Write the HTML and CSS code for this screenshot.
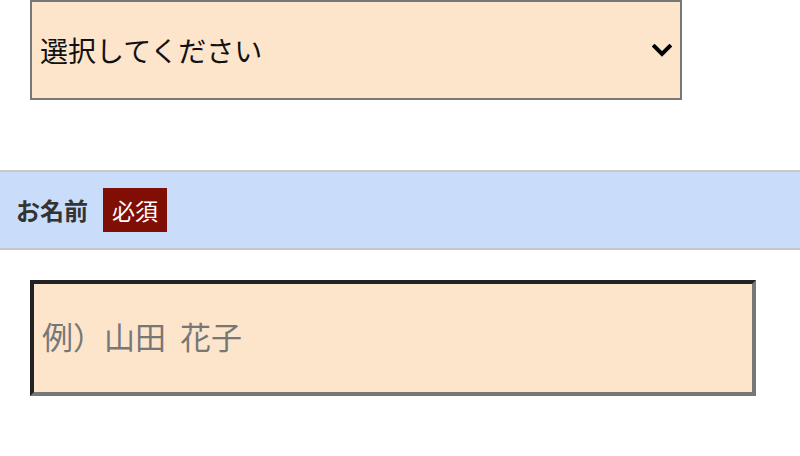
FILE: index.html
```html
<!DOCTYPE html>
<html lang="ja">
<head>
<meta charset="utf-8">
<link rel="stylesheet" href="styles.css">
</head>
<body>
<div class="page">
  <div class="select-wrap">
    <select class="select">
      <option>選択してください</option>
    </select>
    <svg class="chevron" width="20" height="13" viewBox="0 0 20 13" aria-hidden="true">
      <path d="M2.5 2.5 L10 10 L17.5 2.5" fill="none" stroke="#000" stroke-width="4" stroke-linecap="square" stroke-linejoin="miter"/>
    </svg>
  </div>
  <div class="band">
    <span class="label">お名前</span>
    <span class="badge">必須</span>
  </div>
  <div class="field">
    <input class="input" type="text" placeholder="例）山田 花子">
  </div>
</div>
</body>
</html>
```
FILE: styles.css
```css
html, body {
  margin: 0;
  padding: 0;
  background: #fff;
}
body {
  font-family: "Noto Sans CJK JP", "Noto Sans", sans-serif;
}
.page {
  display: flex;
  flex-direction: column;
}
.select-wrap {
  position: relative;
  width: 652px;
  margin-left: 30px;
}
.select {
  appearance: none;
  -webkit-appearance: none;
  display: block;
  box-sizing: border-box;
  width: 652px;
  height: 100px;
  margin: 0;
  padding: 0 40px 0 8px;
  border: 2px solid #777;
  border-radius: 0;
  background: #fde5cc;
  color: #111;
  font-family: "Noto Sans CJK JP", sans-serif;
  font-size: 28px;
  outline: none;
}
.chevron {
  position: absolute;
  left: 622px;
  top: 44px;
}
.band {
  margin-top: 70px;
  height: 76px;
  box-sizing: content-box;
  border-top: 2px solid #c8c8c8;
  border-bottom: 2px solid #c8c8c8;
  background: #c9dcf9;
  display: flex;
  align-items: center;
  padding-left: 16px;
  gap: 15px;
}
.label {
  font-size: 24px;
  font-weight: 700;
  color: #333;
  line-height: 1;
}
.badge {
  background: #800e05;
  color: #fff;
  font-size: 23px;
  line-height: 44px;
  height: 44px;
  padding: 0 9px;
}
.field {
  padding: 30px 0 0 30px;
}
.input {
  display: block;
  box-sizing: border-box;
  width: 726px;
  height: 116px;
  margin: 0;
  padding: 0 8px 6px 8px;
  border-style: solid;
  border-width: 4px;
  border-color: #222 #777 #777 #222;
  border-radius: 0;
  background: #fde5cc;
  font-family: "Noto Sans CJK JP", sans-serif;
  font-size: 31px;
  color: #111;
  outline: none;
}
.input::placeholder {
  color: #777;
  opacity: 1;
  word-spacing: 7px;
}
```
